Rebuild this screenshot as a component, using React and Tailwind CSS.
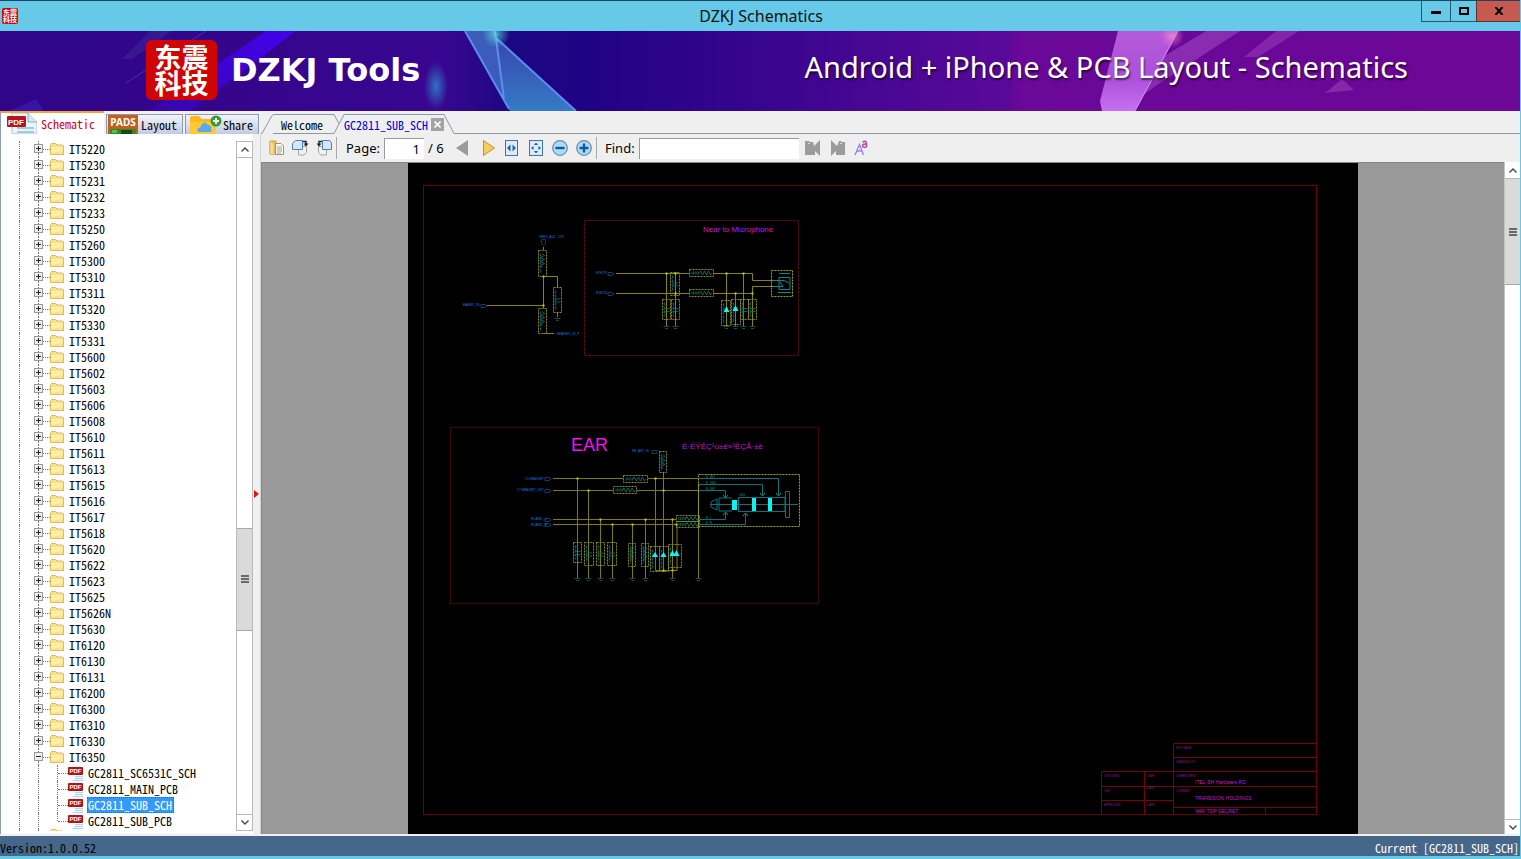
import React, { useState } from 'react'

const models = [
  'IT5220', 'IT5230', 'IT5231', 'IT5232', 'IT5233', 'IT5250', 'IT5260', 'IT5300',
  'IT5310', 'IT5311', 'IT5320', 'IT5330', 'IT5331', 'IT5600', 'IT5602', 'IT5603',
  'IT5606', 'IT5608', 'IT5610', 'IT5611', 'IT5613', 'IT5615', 'IT5616', 'IT5617',
  'IT5618', 'IT5620', 'IT5622', 'IT5623', 'IT5625', 'IT5626N', 'IT5630', 'IT6120',
  'IT6130', 'IT6131', 'IT6200', 'IT6300', 'IT6310', 'IT6330', 'IT6350',
]

const files = ['GC2811_SC6531C_SCH', 'GC2811_MAIN_PCB', 'GC2811_SUB_SCH', 'GC2811_SUB_PCB']

function FolderIcon() {
  return (
    <svg width="14" height="12" viewBox="0 0 14 12" className="shrink-0">
      <path d="M0.5 11.5V1.5L1.5 0.5H5.5L7 2H12.5L13.5 3V11.5Z" fill="#fbe38c" stroke="#dfb95a" />
      <path d="M1 4H13V8L1 10Z" fill="#fff0b0" opacity="0.8" />
    </svg>
  )
}

function PdfIcon() {
  return (
    <svg width="16" height="16" viewBox="0 0 16 16" className="shrink-0">
      <path d="M4 0.5H12L15.5 4V15.5H4Z" fill="#f4f9fc" />
      <path d="M7 11.5H15M7 13.5H15M5 15.5H15" stroke="#a9d3e8" />
      <rect x="0" y="2" width="15" height="8" rx="1" fill="#b5121b" />
      <text x="7.5" y="8" textAnchor="middle" fontSize="6" fontWeight="bold" fill="#fff" fontFamily="Liberation Sans, sans-serif">PDF</text>
    </svg>
  )
}

function TitleBar() {
  return (
    <header className="flex h-[31px] shrink-0 items-start border-t border-[#1d4560] bg-[#66c9e8]">
      <div className="flex h-full flex-1 items-center pl-[2px]">
        <span className="flex h-4 w-4 items-center justify-center rounded-xs bg-[#cf0404] text-center text-[7px] leading-[7px] font-bold text-white">
          东震<br />科技
        </span>
      </div>
      <h1 className="pt-1 font-['Noto_Sans',sans-serif] text-[16px] leading-[22px] text-[#111]">DZKJ Schematics</h1>
      <div className="flex flex-1 justify-end">
        <button aria-label="Minimize" className="flex h-[21px] w-[29px] items-center justify-center border-b border-l border-[#24566c]">
          <svg width="10" height="10"><rect y="5" width="10" height="3" /></svg>
        </button>
        <button aria-label="Maximize" className="flex h-[21px] w-[26px] items-center justify-center border-b border-l border-[#24566c]">
          <svg width="10" height="8"><rect x="1" y="1" width="8" height="6" fill="none" stroke="#000" strokeWidth="2" /></svg>
        </button>
        <button aria-label="Close" className="flex h-[21px] w-[44px] items-center justify-center border-b border-l border-[#6b2c29] bg-[#c75a50]">
          <svg width="10" height="8" viewBox="0 0 10 8"><path d="M1.5 0L8.5 8M8.5 0L1.5 8" stroke="#000" strokeWidth="2" /></svg>
        </button>
      </div>
    </header>
  )
}

function Banner() {
  return (
    <div className="relative h-20 shrink-0 bg-[#300587]">
      <svg className="absolute inset-0 h-full w-full" viewBox="0 0 1520 80" preserveAspectRatio="none">
        <defs>
          <linearGradient id="bg">
            <stop offset="0" stopColor="#300587" />
            <stop offset="0.29" stopColor="#380690" />
            <stop offset="0.335" stopColor="#1c0782" />
            <stop offset="0.39" stopColor="#210285" />
            <stop offset="0.48" stopColor="#34048c" />
            <stop offset="0.58" stopColor="#490794" />
            <stop offset="0.664" stopColor="#5a0999" />
            <stop offset="0.67" stopColor="#6a0899" />
            <stop offset="1" stopColor="#6c0797" />
          </linearGradient>
          <linearGradient id="beam" x1="1" y1="0" x2="0" y2="1">
            <stop offset="0" stopColor="#4303e8" />
            <stop offset="0.5" stopColor="#3c04cf" />
            <stop offset="1" stopColor="#3506a8" />
          </linearGradient>
          <linearGradient id="glass" x1="0" y1="0" x2="0" y2="1">
            <stop offset="0" stopColor="#3b4fb4" />
            <stop offset="1" stopColor="#3a8fd2" />
          </linearGradient>
          <linearGradient id="pink" x1="0" y1="0" x2="0" y2="1">
            <stop offset="0" stopColor="#b45ad8" />
            <stop offset="0.6" stopColor="#ad50dc" />
            <stop offset="1" stopColor="#c670f0" />
          </linearGradient>
          <radialGradient id="glow">
            <stop offset="0" stopColor="#2f72c4" />
            <stop offset="1" stopColor="#2f72c4" stopOpacity="0" />
          </radialGradient>
          <radialGradient id="spark">
            <stop offset="0" stopColor="#60f0e0" />
            <stop offset="1" stopColor="#50d8d0" stopOpacity="0" />
          </radialGradient>
          <radialGradient id="flare">
            <stop offset="0" stopColor="#ff90c8" />
            <stop offset="1" stopColor="#f07ad0" stopOpacity="0" />
          </radialGradient>
        </defs>
        <rect width="1520" height="80" fill="url(#bg)" />
        <path d="M266 0H296L190 80H148Z" fill="url(#beam)" />
        <path d="M150 0H172L132 28H122Z" fill="#3d2a9a" opacity="0.5" />
        <path d="M206 0L126 52" stroke="#5a49c8" opacity="0.6" />
        <path d="M10 80L36 68L44 80Z" fill="#3a20b8" opacity="0.6" />
        <ellipse cx="436" cy="55" rx="12" ry="24" fill="url(#glow)" />
        <path d="M465 0H495L504 70Z" fill="#3b5cb8" />
        <path d="M495 6L576 80H510L503 68Z" fill="url(#glass)" opacity="0.85" />
        <path d="M465 0L509 78M495 0L504 68M495 6L576 80" stroke="#5c8cf0" strokeWidth="2" fill="none" />
        <circle cx="496" cy="3" r="14" fill="url(#spark)" opacity="0.7" />
        <path d="M1206 0H1240L1160 52L1140 66L1166 24Z" fill="#a850c8" opacity="0.5" />
        <path d="M1276 0H1299L1258 26H1244Z" fill="#a850c8" opacity="0.4" />
        <path d="M1118 0H1178L1135 80H1102L1100 70Z" fill="url(#pink)" />
        <path d="M1178 0L1135 80" stroke="#d894f4" />
        <circle cx="1172" cy="5" r="12" fill="url(#flare)" opacity="0.7" />
        <path d="M1325 62L1342 48L1354 59Z" fill="#9440b8" opacity="0.6" />
      </svg>
      <div className="relative flex h-full items-center justify-between pr-[112px] pb-[2px] pl-[146px] text-white">
        <div className="flex items-center gap-[14px]">
          <span className="flex h-[60px] w-[71px] items-center justify-center rounded-md bg-[#cf0404] text-center text-[27px] leading-[26px] font-bold">
            东震<br />科技
          </span>
          <span className="font-['DejaVu_Sans',sans-serif] text-[32px] leading-10 font-bold">DZKJ Tools</span>
        </div>
        <span className="pb-[6px] font-['Noto_Sans',sans-serif] text-[29px] leading-9 [text-shadow:1px_2px_2px_rgba(0,0,0,0.6)]">
          Android + iPhone &amp; PCB Layout - Schematics
        </span>
      </div>
    </div>
  )
}

function PanelTabs() {
  return (
    <div className="flex h-[23px] shrink-0 items-end">
      <button className="flex h-[23px] w-[104px] items-center gap-1 border-t-2 border-l border-[#f2a33c] border-l-[#8e9bab] bg-white pl-[6px] text-[#d00018]">
        <svg width="30" height="21" viewBox="0 0 30 21">
          <path d="M5 0H21L30 9V21H5Z" fill="#eaf4fa" stroke="#a8c4d6" />
          <path d="M21 0V9H30" fill="#d5e8f2" stroke="#8fb0c6" />
          <path d="M10 15H27M10 19H27" stroke="#9fcbe4" strokeWidth="2" />
          <rect y="3" width="19" height="11" rx="1" fill="#b8141c" />
          <text x="9" y="12" textAnchor="middle" fontSize="8" fontWeight="bold" fill="#fff" fontFamily="Liberation Sans, sans-serif">PDF</text>
        </svg>
        Schematic
      </button>
      <button className="ml-[2px] flex h-5 w-[77px] items-center gap-[3px] border border-b-0 border-[#8e9bab] bg-linear-to-b from-[#f2f4fa] to-[#c3cbe2] pl-px">
        <svg width="30" height="19" viewBox="0 0 30 19">
          <rect width="30" height="19" fill="#c4601c" />
          <text x="15" y="11" textAnchor="middle" fontSize="10" fontWeight="bold" fill="#fff" fontFamily="Noto Sans, sans-serif">PADS</text>
          <path d="M2 14H28V19H2Z" fill="#2f8a2c" />
          <path d="M13 15H24V19H13Z" fill="#174a18" />
          <path d="M4 15H9V18H4Z" fill="#65b84c" />
        </svg>
        Layout
      </button>
      <button className="ml-[2px] flex h-5 w-[74px] items-center gap-px border border-b-0 border-[#8e9bab] bg-linear-to-b from-[#f2f4fa] to-[#c3cbe2] pl-1">
        <svg width="32" height="19" viewBox="0 0 32 19">
          <path d="M0 19V3Q0 1 2 1H9L12 4H24Q26 4 26 6V19Z" fill="#f8b91c" />
          <path d="M0 7H26V19H0Z" fill="#ffc935" />
          <path d="M9 17Q6 16 8 13Q11 13 11 10Q15 5 18 10Q22 10 21 14Q23 17 20 17Z" fill="#5aa9ea" />
          <circle cx="26" cy="6" r="5.5" fill="#2f9e3a" />
          <path d="M26 3V9M23 6H29" stroke="#fff" strokeWidth="2" />
        </svg>
        Share
      </button>
    </div>
  )
}

function TreeRow({ name, open }) {
  return (
    <li className="flex h-4 items-center pl-[19px]">
      <span className="h-4 w-[15px] border-l border-dotted border-[#777]"></span>
      <button aria-label={`Toggle ${name}`} className="flex h-4 w-[9px] flex-col items-center">
        <span className="h-[3px] border-l border-dotted border-[#777]"></span>
        <svg width="9" height="9" viewBox="0 0 9 9">
          <rect x="0.5" y="0.5" width="8" height="8" fill="#f0f0f0" stroke="#979797" />
          <path d={open ? 'M2 4.5H7' : 'M2 4.5H7M4.5 2V7'} stroke="#222" />
        </svg>
        <span className="h-1 border-l border-dotted border-[#777]"></span>
      </button>
      <span className="w-[7px] border-t border-dotted border-[#777]"></span>
      <FolderIcon />
      <span className="pl-[5px]">{name}</span>
    </li>
  )
}

function FileRow({ name, selected, last, onSelect }) {
  return (
    <li className="flex h-4 items-center pl-[19px]">
      <span className="h-4 w-[19px] border-l border-dotted border-[#777]"></span>
      <span className="h-4 w-[19px] border-l border-dotted border-[#777]"></span>
      <span className={`self-start border-l border-dotted border-[#777] ${last ? 'h-2' : 'h-4'}`}></span>
      <span className="w-[10px] border-t border-dotted border-[#777]"></span>
      <PdfIcon />
      <button
        onClick={onSelect}
        className={`ml-[3px] h-4 pr-[2px] pl-px leading-[14px] ${
          selected ? 'bg-[#3399ff] text-white outline-1 -outline-offset-1 outline-[#8a5a14] outline-dotted' : ''
        }`}
      >
        {name}
      </button>
    </li>
  )
}

function Chevron({ up }) {
  return (
    <svg width="8" height="5" viewBox="0 0 8 5" fill="none" stroke="#444" strokeWidth="1.4">
      <path d={up ? 'M0.5 4.5L4 1L7.5 4.5' : 'M0.5 0.5L4 4L7.5 0.5'} />
    </svg>
  )
}

function Grip() {
  return (
    <svg width="8" height="8" viewBox="0 0 8 8"><path d="M0 1H8M0 4H8M0 7H8" stroke="#444" strokeWidth="1.6" /></svg>
  )
}

function Sidebar() {
  const [current, setCurrent] = useState('GC2811_SUB_SCH')

  return (
    <aside className="flex w-[261px] shrink-0 flex-col bg-[#f0f0f0]">
      <PanelTabs />
      <div className="flex min-h-0 flex-1">
        <div className="flex min-w-0 flex-1 border-l border-[#8e9bab] bg-white pt-[7px] pb-[3px]">
          <ul className="-ml-px min-w-0 flex-1 overflow-hidden">
            {models.map((m) => (
              <TreeRow key={m} name={m} open={m === 'IT6350'} />
            ))}
            {files.map((f, i) => (
              <FileRow key={f} name={f} selected={f === current} last={i === files.length - 1} onSelect={() => setCurrent(f)} />
            ))}
            {/* next folder, scrolled out of view */}
            <li className="flex items-start pl-[19px]">
              <span className="h-4 w-[19px] border-l border-dotted border-[#777]"></span>
              <span className="h-4 w-[12px] border-l border-dotted border-[#777]"></span>
              <FolderIcon />
            </li>
          </ul>
          <div className="flex w-[17px] shrink-0 flex-col border-x border-[#b9b9b9] bg-white">
            <button aria-label="Scroll up" className="flex h-[17px] items-center justify-center border-y border-[#b9b9b9]"><Chevron up /></button>
            <div className="flex-[372]"></div>
            <div className="flex flex-[102] items-center justify-center border-y border-[#a8a8a8] bg-[#dadada]"><Grip /></div>
            <div className="flex-[184]"></div>
            <button aria-label="Scroll down" className="flex h-[17px] items-center justify-center border-y border-[#b9b9b9]"><Chevron /></button>
          </div>
        </div>
        <div className="flex w-2 items-center border-r border-[#d0d4d8] bg-[#eef0f2] pl-px">
          <svg width="5" height="30" viewBox="0 0 5 30"><path d="M0 21V29L5 25Z" fill="#d81818" /></svg>
        </div>
      </div>
    </aside>
  )
}

function DocumentTabs() {
  return (
    <div className="flex h-[23px] shrink-0 items-end">
      <svg width="12" height="20" fill="none" stroke="#8b98a5"><path d="M0 19.5H1L11 1.5H12" /></svg>
      <button className="h-5 w-[61px] border-y border-[#8b98a5] pl-2 text-left leading-5">Welcome</button>
      <svg width="10" height="20" fill="none" stroke="#8b98a5"><path d="M0 0.5L5 9.5M0 19.5L10 0.5" /></svg>
      <div className="flex h-5 w-[100px] items-center gap-[3px] border-t border-[#8b98a5] text-[#0000d0]">
        <button>GC2811_SUB_SCH</button>
        <button aria-label="Close tab" className="flex h-[13px] w-[13px] items-center justify-center bg-[#a3a3a3]">
          <svg width="7" height="7" viewBox="0 0 7 7"><path d="M0.5 0.5L6.5 6.5M6.5 0.5L0.5 6.5" stroke="#fff" strokeWidth="1.6" /></svg>
        </button>
      </div>
      <svg width="11" height="20" fill="none" stroke="#8b98a5"><path d="M0 0.5L10 19.5H11" /></svg>
      <div className="h-px flex-1 bg-[#8b98a5]"></div>
    </div>
  )
}

function Toolbar() {
  return (
    <div className="flex h-7 shrink-0 items-center pl-2 font-['Noto_Sans',sans-serif] text-[13px] text-black">
      <button aria-label="Open">
        <svg width="16" height="16" viewBox="0 0 16 16">
          <path d="M1 1H7V14H1Z" fill="#f0c66c" stroke="#c99a3f" />
          <path d="M6.5 3.5H12L14.5 6V14.5H6.5Z" fill="#fffbe9" stroke="#b4914f" />
          <path d="M8 7H13M8 9H13M8 11H13M8 13H12" stroke="#6d8fb5" strokeWidth="0.8" />
          <path d="M1 1L5 3V15L1 14Z" fill="#f8dc94" stroke="#d3a448" strokeWidth="0.6" />
        </svg>
      </button>
      <button aria-label="Rotate right" className="ml-[7px]">
        <svg width="17" height="16" viewBox="0 0 17 16">
          <path d="M6.5 6.5H14.5V12.500L12 15H6.500Z" fill="#f2f2f2" stroke="#a2a6ab" />
          <path d="M3.5 0.5H10.5V9.5H0.5V3.5Z" fill="#d5e7f7" stroke="#4e7fb0" />
          <path d="M11 1.5H14V4" fill="none" stroke="#222" strokeWidth="1.4" />
          <path d="M11.5 3.5H16.5L14 6.5Z" fill="#222" />
        </svg>
      </button>
      <button aria-label="Rotate left" className="ml-[7px]">
        <svg width="17" height="16" viewBox="0 0 17 16">
          <path d="M2.5 6.5H10.5V15H5L2.5 12.5Z" fill="#f2f2f2" stroke="#a2a6ab" />
          <path d="M6.5 0.5H13.5L15.5 3V9.5H6.5Z" fill="#d5e7f7" stroke="#4e7fb0" />
          <path d="M6 1.5H3V4" fill="none" stroke="#222" strokeWidth="1.4" />
          <path d="M0.5 3.5H5.5L3 6.5Z" fill="#222" />
        </svg>
      </button>
      <span className="ml-[3px] h-[22px] border-l border-[#aaa]"></span>
      <label htmlFor="page" className="ml-[9px] w-[38px]">Page:</label>
      <input id="page" defaultValue="1" className="h-[21px] w-10 border-t border-l border-[#999] bg-white pr-1 text-right" />
      <span className="ml-1 w-[28px]">/ 6</span>
      <button aria-label="Previous page">
        <svg width="12" height="16" viewBox="0 0 12 16"><path d="M12 0V16L0 8Z" fill="#9b9b9b" /></svg>
      </button>
      <button aria-label="Next page" className="ml-[15px]">
        <svg width="12" height="16" viewBox="0 0 12 16"><path d="M0.5 0.5V15.5L11.5 8Z" fill="#f6ce5c" stroke="#bf9030" /></svg>
      </button>
      <button aria-label="Fit width" className="ml-[10px]">
        <svg width="13" height="16" viewBox="0 0 13 16">
          <rect x="0.5" y="0.5" width="12" height="15" fill="#dcecf9" stroke="#3f74a6" />
          <path d="M5.5 4.5V11.5L2 8ZM7.5 4.5V11.5L11 8Z" fill="#1c62a4" />
        </svg>
      </button>
      <button aria-label="Fit page" className="ml-[11px]">
        <svg width="14" height="16" viewBox="0 0 14 16">
          <rect x="0.5" y="0.5" width="13" height="15" fill="#dcecf9" stroke="#3f74a6" />
          <path d="M5 5L7 2.5L9 5ZM5 11L7 13.5L9 11ZM4.5 6L2 8L4.5 10ZM9.5 6L12 8L9.5 10Z" fill="#1c62a4" />
        </svg>
      </button>
      <button aria-label="Zoom out" className="ml-[9px]">
        <svg width="16" height="16" viewBox="0 0 16 16">
          <circle cx="8" cy="8" r="7.3" fill="#a9dcf8" stroke="#6f8ba4" strokeWidth="1.2" />
          <path d="M3.5 8H12.5" stroke="#14579a" strokeWidth="2.4" />
        </svg>
      </button>
      <button aria-label="Zoom in" className="ml-2">
        <svg width="16" height="16" viewBox="0 0 16 16">
          <circle cx="8" cy="8" r="7.3" fill="#a9dcf8" stroke="#6f8ba4" strokeWidth="1.2" />
          <path d="M3.5 8H12.5M8 3.5V12.5" stroke="#14579a" strokeWidth="2.4" />
        </svg>
      </button>
      <span className="ml-1 h-[22px] border-l border-[#aaa]"></span>
      <label htmlFor="find" className="ml-2 w-[34px]">Find:</label>
      <input id="find" className="h-[21px] w-40 border-t border-l border-[#999] bg-white px-1" />
      <button aria-label="Find previous" className="ml-[6px]">
        <svg width="16" height="16" viewBox="0 0 16 16"><path d="M0 1H4L5 2H8L9 6L15 0V16L10 11V15H0Z" fill="#9b9b9b" /><path d="M3 3.5H5" stroke="#ddd" /></svg>
      </button>
      <button aria-label="Find next" className="ml-[9px]">
        <svg width="16" height="16" viewBox="0 0 16 16"><path d="M15 2H12L11 1H9L7 6L1 0V16L6 11V15H15Z" fill="#9b9b9b" /><path d="M10 3.5H12" stroke="#ddd" /></svg>
      </button>
      <button aria-label="Match case" className="ml-2">
        <svg width="16" height="16" viewBox="0 0 16 16" fill="none">
          <path d="M1 15L5.5 4.5L9.5 15M3 11H8" stroke="#8f86f0" strokeWidth="1.4" />
          <path d="M8.5 2Q12 0 12.5 3V7.5M12.5 4Q8.5 3.5 8.5 6Q9.5 8.5 12.5 6.5" stroke="#b0489c" strokeWidth="1.5" />
        </svg>
      </button>
    </div>
  )
}

// dashed component outlines: [x, y, width, height, kind]
const parts = [
  [538.5, 250.5, 8, 26, 'r'], [553.5, 287.5, 8, 25, 'c'], [538.5, 308.5, 8, 25, 'r'],
  [670.5, 272.5, 9, 23, 'c'], [662.5, 299.5, 8, 20, 'c'], [671.5, 299.5, 8, 20, 'c'],
  [689.5, 269.5, 24, 7, 'h'], [689.5, 289.5, 24, 7, 'h'],
  [721.5, 300.5, 9, 25, 'd'], [731.5, 299.5, 9, 25, 'd'], [740.5, 299.5, 8, 20, 'c'], [748.5, 299.5, 8, 20, 'c'],
  [659.5, 451.5, 7, 21, 'r'], [623.5, 475.5, 24, 7, 'h'], [613.5, 486.5, 23, 7, 'h'],
  [676.5, 515.5, 23, 6, 'h'], [676.5, 521.5, 23, 6, 'h'],
  [573.5, 542.5, 8, 20, 'c'], [584.5, 542.5, 9, 23, 'c'], [596.5, 542.5, 8, 23, 'c'], [607.5, 542.5, 9, 23, 'c'],
  [628.5, 543.5, 7, 23, 'r'], [641.5, 543.5, 7, 23, 'r'],
  [650.5, 546.5, 9, 25, 'd'], [659.5, 546.5, 9, 25, 'd'], [668.5, 544.5, 13, 23, 'd'],
]

const dots = [
  [543, 276], [543, 305], [666, 273], [675, 273], [675, 293], [726, 273], [743, 273], [735, 293], [752, 293],
  [577, 478], [655, 478], [588, 490], [663, 490], [600, 519], [645, 519], [672, 519], [612, 524], [632, 524],
  [676, 524], [663, 570], [672, 570],
]

const grounds = [
  [557, 318], [666, 326], [675, 326], [726, 326], [735, 326], [743, 326], [752, 326],
  [577, 578], [588, 578], [600, 578], [612, 578], [632, 578], [645, 578], [672, 578], [698, 578],
]

const nets = [
  [539, 238, 'VREG_AUD'], [463, 306, 'EARMIC_IN'], [557, 335, 'HEADMIC_IN_P'],
  [596, 274, 'M MICP'], [596, 294, 'M MICN'], [632, 452, 'FM_ANT_IN'],
  [525, 480, 'C5 HEADSET'], [517, 491, 'C7 HEADSET_DET'], [531, 520, 'R1 AMIC_L'], [531, 526, 'R2 AMIC_R'],
]

const ports = [
  [481, 305], [608, 273], [608, 293], [545, 478], [545, 490], [545, 519], [545, 524],
]

const labels = [
  [1176, 749, 'FILE NAME'], [1176, 763, 'DRAWING NO'], [1176, 777, 'DEPARTMENT'], [1176, 792, 'COMPANY'],
  [1104, 777, 'DESIGNED'], [1147, 777, 'DATE'], [1104, 792, 'CHK'], [1147, 789, 'DATE'], [1104, 806, 'APPROVED'], [1147, 806, 'DATE'],
]

function Part({ x, y, w, h, kind }) {
  const cx = x + w / 2
  const cy = y + h / 2
  let symbol = ''
  if (kind === 'r') {
    symbol = `M${cx} ${y + 3}l2 2l-4 2l4 2l-4 2l4 2l-4 2l2 2`
  } else if (kind === 'h') {
    symbol = `M${cx - 2} ${cy}l1 -2l2 4l2 -4l2 4l2 -4l2 4l1 -2`
  } else if (kind === 'c') {
    symbol = `M${cx - 3} ${cy - 1}h6M${cx - 3} ${cy + 2}h6`
  }
  return (
    <g>
      <path d={`M${x} ${y}h${w}v${h}h${-w}Z`} stroke="#8c8c12" strokeDasharray="2 1" fill="none" />
      <path d={symbol} stroke="#127a7c" strokeWidth="0.8" fill="none" />
      {kind === 'h' ? (
        <path d={`M${x + 2} ${cy}h8`} stroke="#0b5c50" strokeWidth="3" strokeDasharray="1 0.6" />
      ) : (
        <path d={`M${x + 2} ${y + 3}v${h - 6}`} stroke="#0b5560" strokeWidth="1.5" strokeDasharray="3 1" />
      )}
    </g>
  )
}

function Schematic() {
  return (
    <svg viewBox="408 163 950 671" className="block h-[671px] w-[950px] shrink-0 bg-black" fill="none" fontFamily="Liberation Sans, sans-serif">
      <rect x="423.5" y="185.5" width="893" height="629" stroke="#6c0008" />
      <rect x="584.5" y="220.5" width="214" height="135" stroke="#5c0a1c" strokeDasharray="3 1" />
      <rect x="450.5" y="427.5" width="368" height="176" stroke="#4a0818" strokeDasharray="3 1" />

      {/* wires */}
      <path
        d="M543.5 247V250M543.5 276V308M543.5 276.5H557.5V287M557.5 313V317M487 305.5H543M543.5 333.5H554
           M616 273.5H689M714 273.5H752.5V280.5H776M616 293.5H689M714 293.5H752.5V286.5H776
           M666.5 273V326M675.5 273V326M726.5 273V326M735.5 293V326M743.5 273V326M752.5 293V326"
        stroke="#85850f"
      />
      <path
        d="M553 478.5H623M648 478.5H698M553 490.5H613M637 490.5H698M553 519.5H676M553 524.5H676
           M577.5 478V578M588.5 490V578M600.5 519V578M612.5 524V578M632.5 524V578M645.5 519V578
           M655.5 478V570.5H677V524M663.5 472V570M672.5 519V578M698.5 484V578"
        stroke="#7c7c0e"
      />
      {parts.map(([x, y, w, h, kind]) => (
        <Part key={`${x}-${y}`} x={x} y={y} w={w} h={h} kind={kind} />
      ))}
      {dots.map(([x, y]) => (
        <rect key={`${x}-${y}`} x={x - 0.5} y={y - 0.5} width="2" height="2" fill="#c8c820" />
      ))}
      {grounds.map(([x, y]) => (
        <path key={`${x}-${y}`} d={`M${x - 2.5} ${y}.5h6M${x - 1} ${y + 2}.5h3`} stroke="#0d5054" />
      ))}
      <path d="M726.5 306l3 6h-6ZM735.5 305l3 6h-6ZM655 552l3 5h-6ZM663.5 552l3 5h-6ZM672.5 550l3 6h-6ZM676.5 550l3 6h-6Z" fill="#12f4f4" />

      {ports.map(([x, y]) => (
        <path key={`${x}-${y}`} d={`M${x} ${y - 1}.5h4l2 1.5l-2 1.5h-4Z`} stroke="#1a4a86" strokeWidth="0.8" />
      ))}
      <path d="M541.5 239.5h4v4l-2 2l-2 -2ZM652 450.5h5v3h-5Z" stroke="#1a4a66" strokeWidth="0.8" />
      <g fill="#1a78e0" fontSize="3">
        {nets.map(([x, y, name]) => (
          <text key={`${x}-${y}`} x={x} y={y}>{name}</text>
        ))}
      </g>

      {/* microphone connector */}
      <rect x="771.5" y="270.5" width="21" height="26" stroke="#a0a014" strokeDasharray="2 1" />
      <path d="M779 277.5H790V289.5H779ZM774 280.5H784L789 283M774 286.5H783L780 282M779 273.5H790M778 292.5H791" stroke="#0f8790" />

      {/* headset jack */}
      <rect x="698.5" y="474.5" width="101" height="52" stroke="#a0a014" strokeDasharray="2 1" />
      <path
        d="M699 478.5H778.5V495M699 484.5H762.5V495M699 490.5H725.5V497M700 519.5H725.5V513M700 524.5H745.5V514
           M710 504.5H798M711 502L717 499V510L711 507ZM719 498H732M719 511H732M719 498V511M738.5 497.5H785V511.5H738.5Z
           M785.5 491.5H789.5V517.5H785.5Z"
        stroke="#0c7478"
      />
      <path d="M776 493l2.5 3l2.5 -3M760 493l2.5 3l2.5 -3M723 495l2.5 3l2.5 -3M723 515l2.5 -3l2.5 3M743 516l2.5 -3l2.5 3" stroke="#0f9094" />
      <path d="M732 500h5v10h-5ZM752 498h4v13h-4ZM768 498h4v13h-4Z" fill="#10f0f0" />
      <g fill="#0f8f94" fontSize="3">
        <text x="706" y="478">E_MIC</text>
        <text x="706" y="484">E_GND</text>
        <text x="706" y="490">E_DET</text>
        <text x="706" y="519">E_L</text>
        <text x="706" y="524">E_R</text>
        <text x="739" y="496">J601</text>
        <text x="558" y="238">2.8V</text>
      </g>

      {/* title block */}
      <path
        d="M1173.5 814V743.5H1316M1173 757.5H1316M1101.5 814V771.5H1316M1101 786.5H1316M1101 800.5H1173
           M1173 807.5H1316M1144.5 771V814M1265.5 807V814"
        stroke="#78000a"
      />
      <g fill="#8c148c" fontSize="3">
        {labels.map(([x, y, name]) => (
          <text key={`${x}-${y}`} x={x} y={y}>{name}</text>
        ))}
      </g>
      <g fill="#c41cc4" fontSize="5">
        <text x="1195" y="784">ITEL-SH Hardware RD</text>
        <text x="1195" y="800">TRANSSION HOLDINGS</text>
        <text x="1195" y="813">\MAI TOP SECRET</text>
      </g>
      <g fill="#ee14ee">
        <text x="703" y="232" fontSize="8" fill="#d414d4">Near to Microphone</text>
        <text x="571" y="451" fontSize="18">EAR</text>
        <text x="682" y="449" fontSize="8" fill="#c414c4">É·ÉÝÊÇ¹ú±ê»¹ÊÇÅ·±ê</text>
      </g>
    </svg>
  )
}

function Viewer() {
  return (
    <main className="flex min-w-0 flex-1 flex-col bg-[#efefef]">
      <DocumentTabs />
      <Toolbar />
      <div className="flex min-h-0 flex-1 border-l border-[#888]">
        <div className="flex min-w-0 flex-1 justify-center overflow-hidden border-t border-[#858585] bg-[#999]">
          <Schematic />
        </div>
        <div className="flex w-4 flex-col border-l border-[#c4c4c4] bg-white">
          <button aria-label="Page up" className="flex h-[17px] items-center justify-center border-b border-[#b9b9b9]"><Chevron up /></button>
          <div className="flex flex-[106] items-center justify-center border-b border-[#a8a8a8] bg-[#dadada]"><Grip /></div>
          <div className="flex-[538]"></div>
          <button aria-label="Page down" className="flex h-[15px] items-center justify-center border-t border-[#b9b9b9]"><Chevron /></button>
        </div>
      </div>
    </main>
  )
}

export default function App() {
  return (
    <div className="flex h-screen flex-col overflow-hidden border-r border-b-3 border-[#66c9e8] bg-[#f0f0f0] font-['Noto_Sans_CJK_SC',sans-serif] text-[12px] leading-4 text-black [font-feature-settings:'hwid']">
      <TitleBar />
      <Banner />
      <div className="flex min-h-0 flex-1 pb-[2px]">
        <Sidebar />
        <Viewer />
      </div>
      <footer className="flex h-5 shrink-0 items-end justify-between bg-[#44678a] pr-px">
        <span>Version:1.0.0.52</span>
        <span className="text-white">Current [GC2811_SUB_SCH]</span>
      </footer>
    </div>
  )
}
